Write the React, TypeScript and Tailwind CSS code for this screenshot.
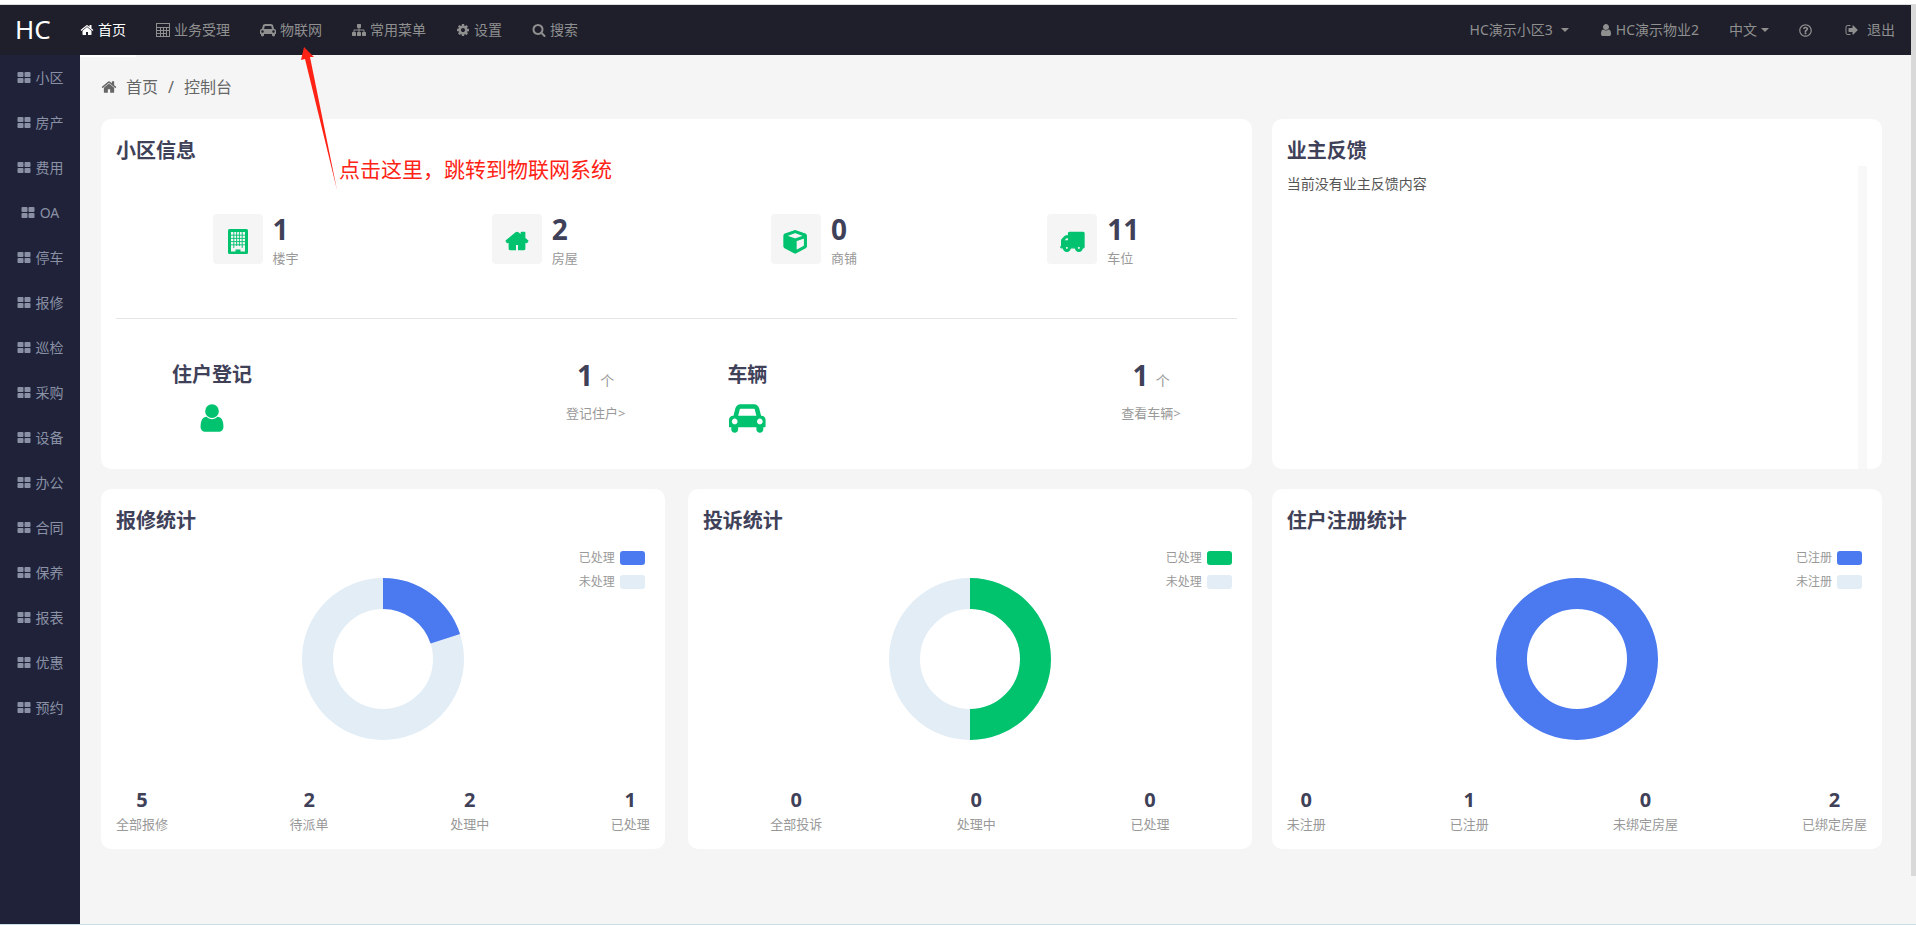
import type { ReactNode } from "react";
import { FaRegQuestionCircle } from "react-icons/fa";

const icons = {
  home: "M1472 992v480q0 26-19 45t-45 19h-384v-384h-256v384h-384q-26 0-45-19t-19-45v-480q0-1 .5-3t.5-3l575-474 575 474q1 2 1 6zm223-69l-62 74q-8 9-21 11h-3q-13 0-21-7l-692-577-692 577q-12 8-24 7-13-2-21-11l-62-74q-8-10-7-23.5t11-21.5l719-599q32-26 76-26t76 26l244 204v-195q0-14 9-23t23-9h192q14 0 23 9t9 23v408l219 182q10 8 11 21.5t-7 23.5z",
  car: "M480 1088q0-66-47-113t-113-47-113 47-47 113 47 113 113 47 113-47 47-113zm36-320h1016l-89-357q-2-8-14-17.5t-21-9.5h-768q-9 0-21 9.5t-14 17.5zm1372 320q0-66-47-113t-113-47-113 47-47 113 47 113 113 47 113-47 47-113zm160-96v384q0 14-9 23t-23 9h-96v128q0 80-56 136t-136 56-136-56-56-136v-128h-1024v128q0 80-56 136t-136 56-136-56-56-136v-128h-96q-14 0-23-9t-9-23v-384q0-93 65.5-158.5t158.5-65.5h28l105-419q23-94 104-157.5t179-63.5h768q98 0 179 63.5t104 157.5l105 419h28q93 0 158.5 65.5t65.5 158.5z",
  sitemap:
    "M1792 1248v320q0 40-28 68t-68 28h-320q-40 0-68-28t-28-68v-320q0-40 28-68t68-28h96v-192h-512v192h96q40 0 68 28t28 68v320q0 40-28 68t-68 28h-320q-40 0-68-28t-28-68v-320q0-40 28-68t68-28h96v-192h-512v192h96q40 0 68 28t28 68v320q0 40-28 68t-68 28h-320q-40 0-68-28t-28-68v-320q0-40 28-68t68-28h96v-192q0-52 38-90t90-38h512v-192h-96q-40 0-68-28t-28-68v-320q0-40 28-68t68-28h320q40 0 68 28t28 68v320q0 40-28 68t-68 28h-96v192h512q52 0 90 38t38 90v192h96q40 0 68 28t28 68z",
  cog: "M1152 896q0-106-75-181t-181-75-181 75-75 181 75 181 181 75 181-75 75-181zm512-109v222q0 12-8 23t-20 13l-185 28q-19 54-39 91 35 50 107 138 10 12 10 25t-9 23q-27 37-99 108t-94 71q-12 0-26-9l-138-108q-44 23-91 38-16 136-29 186-7 28-36 28h-222q-14 0-24.5-8.5t-11.5-21.5l-28-184q-49-16-90-37l-141 107q-10 9-25 9-14 0-25-11-126-114-165-168-7-10-7-23 0-12 8-23 15-21 51-66.5t54-70.5q-27-50-41-99l-183-27q-13-2-21-12.5t-8-23.5v-222q0-12 8-23t19-13l186-28q14-46 39-92-40-57-107-138-10-12-10-24 0-10 9-23 26-36 98.5-107.5t94.5-71.5q13 0 26 10l138 107q44-23 91-38 16-136 29-186 7-28 36-28h222q14 0 24.5 8.5t11.5 21.5l28 184q49 16 90 37l142-107q9-9 24-9 13 0 25 10 129 119 165 170 7 8 7 22 0 12-8 23-15 21-51 66.5t-54 70.5q26 50 41 98l183 28q13 2 21 12.5t8 23.5z",
  search:
    "M1216 832q0-185-131.5-316.5t-316.5-131.5-316.5 131.5-131.5 316.5 131.5 316.5 316.5 131.5 316.5-131.5 131.5-316.5zm512 832q0 52-38 90t-90 38q-54 0-90-38l-343-342q-179 124-399 124-143 0-273.5-55.5t-225-150-150-225-55.5-273.5 55.5-273.5 150-225 225-150 273.5-55.5 273.5 55.5 225 150 150 225 55.5 273.5q0 220-124 399l343 343q37 37 37 90z",
  user: "M1536 1399q0 109-62.5 187t-150.5 78h-854q-88 0-150.5-78t-62.5-187q0-85 8.5-160.5t31.5-152 58.5-131 94-89 134.5-34.5q131 128 313 128t313-128q76 0 134.5 34.5t94 89 58.5 131 31.5 152 8.5 160.5zm-256-887q0 159-112.5 271.5t-271.5 112.5-271.5-112.5-112.5-271.5 112.5-271.5 271.5-112.5 271.5 112.5 112.5 271.5z",
  cube: "M896 1629l640-349v-636l-640 233v752zm-64-865l698-254-698-254-698 254zm832-252v768q0 35-18 65t-49 47l-704 384q-28 16-61 16t-61-16l-704-384q-31-17-49-47t-18-65v-768q0-40 23-73t61-47l704-256q22-8 44-8t44 8l704 256q38 14 61 47t23 73z",
  truck:
    "M640 1408q0-52-38-90t-90-38-90 38-38 90 38 90 90 38 90-38 38-90zm-384-512h384v-256h-158q-13 0-22 9l-195 195q-9 9-9 22v30zm1280 512q0-52-38-90t-90-38-90 38-38 90 38 90 90 38 90-38 38-90zm256-1088v1024q0 15-4 26.5t-13.5 18.5-16.5 11.5-23.5 6-22.5 2-25.5 0-22.5-.5q0 106-75 181t-181 75-181-75-75-181h-384q0 106-75 181t-181 75-181-75-75-181h-64q-3 0-22.5.5t-25.5 0-22.5-2-23.5-6-16.5-11.5-13.5-18.5-4-26.5q0-26 19-45t45-19v-320q0-8-.5-35t0-38 2.5-34.5 6.5-37 14-30.5 22.5-30l198-198q19-19 50.5-32t58.5-13h160v-192q0-26 19-45t45-19h1024q26 0 45 19t19 45z",
  signOut:
    "M704 1440q0 4 1 20t.5 26.5-3 23.5-10 19.5-20.5 6.5h-320q-119 0-203.5-84.5t-84.5-203.5v-704q0-119 84.5-203.5t203.5-84.5h320q13 0 22.5 9.5t9.5 22.5q0 4 1 20t.5 26.5-3 23.5-10 19.5-20.5 6.5h-320q-66 0-113 47t-47 113v704q0 66 47 113t113 47h312l11.5 1 11.5 3 8 5.5 7 9 2 13.5zm928-544q0 26-19 45l-544 544q-19 19-45 19t-45-19-19-45v-288h-448q-26 0-45-19t-19-45v-384q0-26 19-45t45-19h448v-288q0-26 19-45t45-19 45 19l544 544q19 19 19 45z",
  thLarge:
    "M832 1024v384q0 52-38 90t-90 38h-512q-52 0-90-38t-38-90v-384q0-52 38-90t90-38h512q52 0 90 38t38 90zm0-768v384q0 52-38 90t-90 38h-512q-52 0-90-38t-38-90v-384q0-52 38-90t90-38h512q52 0 90 38t38 90zm896 768v384q0 52-38 90t-90 38h-512q-52 0-90-38t-38-90v-384q0-52 38-90t90-38h512q52 0 90 38t38 90zm0-768v384q0 52-38 90t-90 38h-512q-52 0-90-38t-38-90v-384q0-52 38-90t90-38h512q52 0 90 38t38 90z",
};

type IconName = keyof typeof icons;

const Icon = ({ name, className }: { name: IconName; className: string }) => (
  <svg
    viewBox={name === "car" ? "0 0 2048 1792" : "0 0 1792 1792"}
    fill="currentColor"
    aria-hidden="true"
    className={className}
  >
    <path d={icons[name]} />
  </svg>
);

const CalculatorIcon = () => (
  <svg viewBox="0 0 14 14" aria-hidden="true" className="h-[14px]">
    <path
      fill="currentColor"
      fillRule="evenodd"
      d="M0 0h14v14h-14zM1 1v3h12v-3zM1 5v2h3v-2zM5 5v2h2v-2zM8 5v2h2v-2zM11 5v2h2v-2zM1 8v2h3v-2zM5 8v2h2v-2zM8 8v2h2v-2zM11 8v5h2v-5zM1 11v2h3v-2zM5 11v2h2v-2zM8 11v2h2v-2z"
    />
  </svg>
);

const BuildingIcon = () => (
  <svg viewBox="0 0 20 25" aria-hidden="true" className="h-[25px]">
    <rect width="20" height="25" rx="1.5" fill="#00c26f" />
    <path d="M3 3h14v19.5h-3v-3.5h-8v3.5h-3z" fill="#f5f5f5" />
    <path
      d="M3 6.2h14M3 9.4h14M3 12.6h14M3 15.8h14M5.8 3v16M8.6 3v14M11.4 3v14M14.2 3v16"
      stroke="#00c26f"
      strokeWidth="0.9"
    />
    <path d="M8 20h4v3h-4z" fill="#00c26f" />
    <path d="M6 19h8v3.5h-1.5v-2h-5v2h-1.5z" fill="#f5f5f5" />
  </svg>
);

const Caret = () => (
  <span className="border-x-4 border-t-4 border-x-transparent border-t-current" />
);

const navItems: { label: string; icon: ReactNode; active?: boolean }[] = [
  { label: "首页", icon: <Icon name="home" className="h-[14px]" />, active: true },
  { label: "业务受理", icon: <CalculatorIcon /> },
  { label: "物联网", icon: <Icon name="car" className="h-[14px]" /> },
  { label: "常用菜单", icon: <Icon name="sitemap" className="h-[14px]" /> },
  { label: "设置", icon: <Icon name="cog" className="h-[14px]" /> },
  { label: "搜索", icon: <Icon name="search" className="h-[14px]" /> },
];

const menus = [
  "小区",
  "房产",
  "费用",
  "OA",
  "停车",
  "报修",
  "巡检",
  "采购",
  "设备",
  "办公",
  "合同",
  "保养",
  "报表",
  "优惠",
  "预约",
];

const boldIcon = "h-6 overflow-visible stroke-current stroke-[100]";

const assets = [
  { label: "楼宇", value: 1, icon: <BuildingIcon /> },
  { label: "房屋", value: 2, icon: <Icon name="home" className={boldIcon} /> },
  { label: "商铺", value: 0, icon: <Icon name="cube" className={boldIcon} /> },
  { label: "车位", value: 11, icon: <Icon name="truck" className={boldIcon} /> },
];

const Header = () => {
  return (
    <header className="flex h-[50px] items-center justify-between bg-[#1e1f2b] text-sm text-[#8f8f8f]">
      <div className="flex items-center">
        <a href="#" className="w-[65px] pl-[15px] text-[26px] text-white">
          HC
        </a>
        <nav className="flex">
          {navItems.map((item) => (
            <a
              key={item.label}
              href="#"
              className={
                item.active
                  ? "relative flex items-center gap-1 px-[15px] text-white after:absolute after:top-[35px] after:left-[15px] after:h-[2px] after:w-14 after:bg-white"
                  : "flex items-center gap-1 px-[15px]"
              }
            >
              {item.icon}
              {item.label}
            </a>
          ))}
        </nav>
      </div>
      <div className="flex">
        <button type="button" className="flex items-center gap-2 px-[15px]">
          HC演示小区3
          <Caret />
        </button>
        <button type="button" className="flex items-center gap-[3px] px-[15px]">
          <Icon name="user" className="h-[14px]" />
          HC演示物业2
        </button>
        <button type="button" className="flex items-center gap-1 px-[15px]">
          中文
          <Caret />
        </button>
        <button type="button" aria-label="帮助" className="px-[15px]">
          <FaRegQuestionCircle className="size-[13px]" />
        </button>
        <button type="button" className="flex items-center gap-2 pr-4 pl-[18px]">
          <Icon name="signOut" className="h-[14px]" />
          退出
        </button>
      </div>
    </header>
  );
};

const Sidebar = () => {
  return (
    <aside className="w-20 shrink-0 bg-[#1f2239]">
      <ul>
        {menus.map((menu) => (
          <li key={menu}>
            <a
              href="#"
              className="flex h-[45px] items-center justify-center gap-[5px] text-sm text-[#8a91a5]"
            >
              <Icon name="thLarge" className="h-[14px]" />
              {menu}
            </a>
          </li>
        ))}
      </ul>
    </aside>
  );
};

const Card = ({ title, children }: { title: string; children: ReactNode }) => (
  <section className="flex flex-col rounded-[10px] bg-white px-[15px] pt-[17px] text-[#3f4159]">
    <h2 className="text-xl leading-[30px] font-bold">{title}</h2>
    {children}
  </section>
);

type SummaryProps = {
  title: string;
  icon: IconName;
  value: number;
  link: string;
};

const Summary = ({ title, icon, value, link }: SummaryProps) => (
  <div className="flex justify-between">
    <div className="flex flex-col items-center">
      <h3 className="text-xl leading-[30px] font-bold">{title}</h3>
      <Icon name={icon} className="mt-3 h-8 text-[#00c26f]" />
    </div>
    <div className="flex flex-col items-center">
      <p className="text-[28px] leading-[30px] font-bold">
        {value} <span className="text-sm font-normal text-[#999]">个</span>
      </p>
      <a href="#" className="mt-3 text-[13px] leading-5 text-[#999]">
        {link}
      </a>
    </div>
  </div>
);

const CommunityInfo = () => (
  <Card title="小区信息">
    <div className="mt-12 grid grid-cols-4 border-b border-[#e6e6e6] pr-1 pb-[50px]">
      {assets.map((asset) => (
        <div key={asset.label} className="flex justify-center gap-[10px]">
          <div className="flex size-[50px] items-center justify-center rounded bg-[#f5f5f5] pt-1 text-[#00c26f]">
            {asset.icon}
          </div>
          <div>
            <p className="text-[28px] leading-[30px] font-bold">{asset.value}</p>
            <p className="mt-1 text-[13px] leading-5 text-[#999]">{asset.label}</p>
          </div>
        </div>
      ))}
    </div>
    <div className="mt-[41px] grid grid-cols-2 gap-[102px] px-14 pb-[35px]">
      <Summary title="住户登记" icon="user" value={1} link="登记住户>" />
      <Summary title="车辆" icon="car" value={1} link="查看车辆>" />
    </div>
  </Card>
);

const Feedback = () => (
  <Card title="业主反馈">
    <div className="flex grow justify-between">
      <p className="mt-2 text-sm text-[#555]">当前没有业主反馈内容</p>
      <div className="w-[9px] bg-[#f8f8f8]" />
    </div>
  </Card>
);

type ChartCardProps = {
  title: string;
  color: string;
  ratio: number;
  legend: [string, string];
  stats: { label: string; value: number }[];
  around?: boolean;
};

const ChartCard = ({ title, color, ratio, legend, stats, around }: ChartCardProps) => (
  <Card title={title}>
    <div className="relative mt-3 flex justify-center pt-[30px]">
      <svg viewBox="0 0 162 162" className="size-[162px] -rotate-90" aria-hidden="true">
        <g fill="none" strokeWidth="31">
          {ratio < 100 && <circle cx="81" cy="81" r="65.5" stroke="#e2edf6" />}
          <circle
            cx="81"
            cy="81"
            r="65.5"
            stroke={color}
            pathLength="100"
            strokeDasharray={ratio < 100 ? `${ratio} 100` : undefined}
          />
        </g>
      </svg>
      <ul className="absolute top-0 right-[5px] flex flex-col gap-1 text-xs leading-5 text-[#999]">
        {legend.map((label, i) => (
          <li key={label} className="flex items-center gap-[5px]">
            {label}
            <span
              className="h-[14px] w-[25px] rounded-[3px]"
              style={{ backgroundColor: i === 0 ? color : "#e2edf6" }}
            />
          </li>
        ))}
      </ul>
    </div>
    <div
      className={
        around
          ? "mt-12 flex justify-around pb-[15px] text-center"
          : "mt-12 flex justify-between pb-[15px] text-center"
      }
    >
      {stats.map((stat) => (
        <div key={stat.label}>
          <p className="text-xl leading-6 font-bold">{stat.value}</p>
          <p className="mt-[2px] text-[13px] leading-5 text-[#999]">{stat.label}</p>
        </div>
      ))}
    </div>
  </Card>
);

const Hint = () => (
  <div className="pointer-events-none absolute top-[47px] left-[300px] text-[#ff2315]">
    <svg viewBox="0 0 40 144" className="h-36 w-10" aria-hidden="true">
      <path d="M4 0L14 10L10 10L37 143L5 12L1 13z" fill="currentColor" />
    </svg>
    <p className="absolute top-[107px] left-[39px] text-[21px] leading-[30px] whitespace-nowrap">
      点击这里，跳转到物联网系统
    </p>
  </div>
);

const App = () => {
  return (
    <div
      lang="zh-CN"
      className="relative flex min-h-screen flex-col border-b border-[#c8dfe6] bg-[#f5f5f5] pt-1 font-['Noto_Sans','Noto_Sans_CJK_SC',sans-serif] before:absolute before:inset-x-0 before:top-0 before:h-1 before:bg-white"
    >
      <div className="flex grow border-t border-[#ddd]">
        <div className="flex grow flex-col">
          <Header />
          <div className="flex grow">
            <Sidebar />
            <main className="grow pt-4 pr-[29px] pl-[21px]">
              <div className="flex h-8 items-center text-base text-[#666]">
                <Icon name="home" className="h-4" />
                <a href="#" className="ml-[9px]">
                  首页
                </a>
                <span className="mx-[10px]">/</span>
                <span>控制台</span>
              </div>
              <div className="mt-4 grid grid-cols-[66fr_35fr] gap-5">
                <CommunityInfo />
                <Feedback />
                <div className="grid grid-cols-2 gap-[23px]">
                  <ChartCard
                    title="报修统计"
                    color="#4a79f0"
                    ratio={20}
                    legend={["已处理", "未处理"]}
                    stats={[
                      { label: "全部报修", value: 5 },
                      { label: "待派单", value: 2 },
                      { label: "处理中", value: 2 },
                      { label: "已处理", value: 1 },
                    ]}
                  />
                  <ChartCard
                    title="投诉统计"
                    color="#02c36d"
                    ratio={50}
                    legend={["已处理", "未处理"]}
                    around
                    stats={[
                      { label: "全部投诉", value: 0 },
                      { label: "处理中", value: 0 },
                      { label: "已处理", value: 0 },
                    ]}
                  />
                </div>
                <ChartCard
                  title="住户注册统计"
                  color="#4a79f0"
                  ratio={100}
                  legend={["已注册", "未注册"]}
                  stats={[
                    { label: "未注册", value: 0 },
                    { label: "已注册", value: 1 },
                    { label: "未绑定房屋", value: 0 },
                    { label: "已绑定房屋", value: 2 },
                  ]}
                />
              </div>
            </main>
          </div>
        </div>
        <div className="w-[5px] pb-12">
          <div className="h-full bg-[#d9d9d9]" />
        </div>
      </div>
      <Hint />
    </div>
  );
};

export default App;
